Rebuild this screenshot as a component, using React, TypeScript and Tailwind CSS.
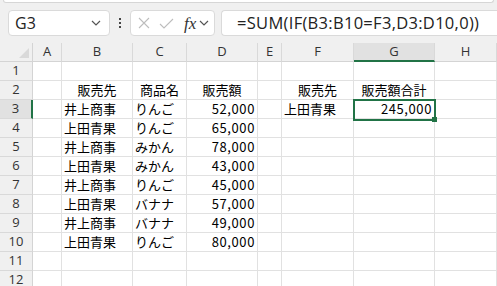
import React from 'react'

const cols = ['A', 'B', 'C', 'D', 'E', 'F', 'G', 'H']

type Cell = { t: string; a?: 'l' | 'c' | 'r' }

const rows: Record<number, Record<string, Cell>> = {
  2: {
    B: { t: '販売先', a: 'c' },
    C: { t: '商品名', a: 'c' },
    D: { t: '販売額', a: 'c' },
    F: { t: '販売先', a: 'c' },
    G: { t: '販売額合計', a: 'c' },
  },
  3: {
    B: { t: '井上商事' },
    C: { t: 'りんご' },
    D: { t: '52,000', a: 'r' },
    F: { t: '上田青果' },
    G: { t: '245,000', a: 'r' },
  },
  4: { B: { t: '上田青果' }, C: { t: 'りんご' }, D: { t: '65,000', a: 'r' } },
  5: { B: { t: '井上商事' }, C: { t: 'みかん' }, D: { t: '78,000', a: 'r' } },
  6: { B: { t: '上田青果' }, C: { t: 'みかん' }, D: { t: '43,000', a: 'r' } },
  7: { B: { t: '井上商事' }, C: { t: 'りんご' }, D: { t: '45,000', a: 'r' } },
  8: { B: { t: '上田青果' }, C: { t: 'バナナ' }, D: { t: '57,000', a: 'r' } },
  9: { B: { t: '井上商事' }, C: { t: 'バナナ' }, D: { t: '49,000', a: 'r' } },
  10: { B: { t: '上田青果' }, C: { t: 'りんご' }, D: { t: '80,000', a: 'r' } },
}

const alignClass = {
  l: 'justify-start pl-[2px]',
  c: 'justify-center',
  r: 'justify-end pr-[2px] tracking-[0.6px]',
}

function Chevron() {
  return (
    <svg width="10" height="6" viewBox="0 0 10 6" fill="none">
      <path d="M1 1l4 4 4-4" stroke="#555" strokeWidth="1.2" />
    </svg>
  )
}

export default function App() {
  return (
    <div className="w-[497px] h-[286px] overflow-hidden bg-[#f0f0f0] text-black" style={{ fontFamily: '"Noto Sans CJK JP", sans-serif' }}>
      {/* ribbon edge */}
      <div className="mx-[3px] h-[3px] bg-white rounded-b-[3px] border-x border-b border-[#d6d6d6]" />

      {/* formula bar */}
      <div className="mt-[7px] h-[26px] flex items-center pl-[8px]">
        <div className="w-[102px] h-[26px] bg-white border border-[#dadada] rounded-[4px] flex items-center justify-between pl-[6px] pr-[8px]">
          <span className="text-[16px] text-[#222]" style={{ fontFamily: '"Open Sans", sans-serif' }}>G3</span>
          <Chevron />
        </div>
        <div className="w-[20px] flex flex-col items-center gap-[2px]">
          <span className="w-[2px] h-[2px] bg-[#444]" />
          <span className="w-[2px] h-[2px] bg-[#444]" />
          <span className="w-[2px] h-[2px] bg-[#444]" />
        </div>
        <div className="w-[85px] h-[26px] bg-white border border-[#dadada] rounded-[4px] flex items-center pl-[6px]">
          <svg width="12" height="12" viewBox="0 0 12 12" fill="none" className="ml-[1px]">
            <path d="M1 1l10 10M11 1L1 11" stroke="#bdbdbd" strokeWidth="1.1" />
          </svg>
          <svg width="15" height="11" viewBox="0 0 15 11" fill="none" className="ml-[9px]">
            <path d="M1 6l4 4L14 1" stroke="#bdbdbd" strokeWidth="1.1" />
          </svg>
          <span className="ml-[10px] text-[17px] italic leading-none text-[#333]" style={{ fontFamily: '"Liberation Serif", serif' }}>fx</span>
          <span className="ml-[3px]"><Chevron /></span>
        </div>
        <div className="ml-[6px] flex-1 h-[26px] bg-white border border-r-0 border-[#dadada] rounded-l-[4px] flex items-center pl-[15px]">
          <span className="text-[16.5px] tracking-[0.3px] text-[#222] whitespace-nowrap" style={{ fontFamily: '"Open Sans", sans-serif' }}>=SUM(IF(B3:B10=F3,D3:D10,0))</span>
        </div>
      </div>

      {/* sheet */}
      <div className="relative mt-[7px] grid grid-cols-[33px_29px_71px_54px_71px_24px_72px_81px_62px] auto-rows-[19px] text-[13px]">
        {/* corner */}
        <div className="relative border-r border-b border-[#d4d4d4] bg-[#f0f0f0]">
          <svg width="10" height="10" viewBox="0 0 10 10" className="absolute right-[3px] bottom-[3px]">
            <path d="M10 0V10H0Z" fill="#d9d9d9" />
          </svg>
        </div>
        {cols.map(c => (
          <div
            key={c}
            className={`flex items-center justify-center border-r border-[#d9d9d9] text-[13px] ${
              c === 'G' ? 'bg-[#e1e1e1] border-b-2 border-b-[#217346]' : 'bg-[#f0f0f0] border-b border-b-[#d4d4d4]'
            } text-[#333]`}
            style={{ fontFamily: '"Open Sans", sans-serif' }}
          >
            {c}
          </div>
        ))}

        {Array.from({ length: 12 }).map((_, i) => {
          const r = i + 1
          const data = rows[r] || {}
          return (
            <React.Fragment key={r}>
              <div
                className={`flex items-center justify-center border-b border-[#d9d9d9] text-[13px] text-[#333] ${
                  r === 3 ? 'bg-[#e1e1e1] border-r-2 border-r-[#217346]' : 'bg-[#f0f0f0] border-r border-r-[#d4d4d4]'
                }`}
                style={{ fontFamily: '"Open Sans", sans-serif' }}
              >
                {r}
              </div>
              {cols.map(c => {
                const cell = data[c]
                return (
                  <div
                    key={c}
                    className={`flex items-center bg-white border-r border-b border-[#e1e1e1] whitespace-nowrap overflow-hidden ${
                      cell ? alignClass[cell.a || 'l'] : ''
                    }`}
                  >
                    {cell?.t}
                  </div>
                )
              })}
            </React.Fragment>
          )
        })}

        {/* active cell G3 */}
        <div className="absolute left-[353px] top-[56px] w-[83px] h-[22px] border-2 border-[#217346] pointer-events-none">
          <div className="absolute -right-[3px] -bottom-[3px] w-[5px] h-[5px] bg-[#217346]" />
        </div>
      </div>
    </div>
  )
}
